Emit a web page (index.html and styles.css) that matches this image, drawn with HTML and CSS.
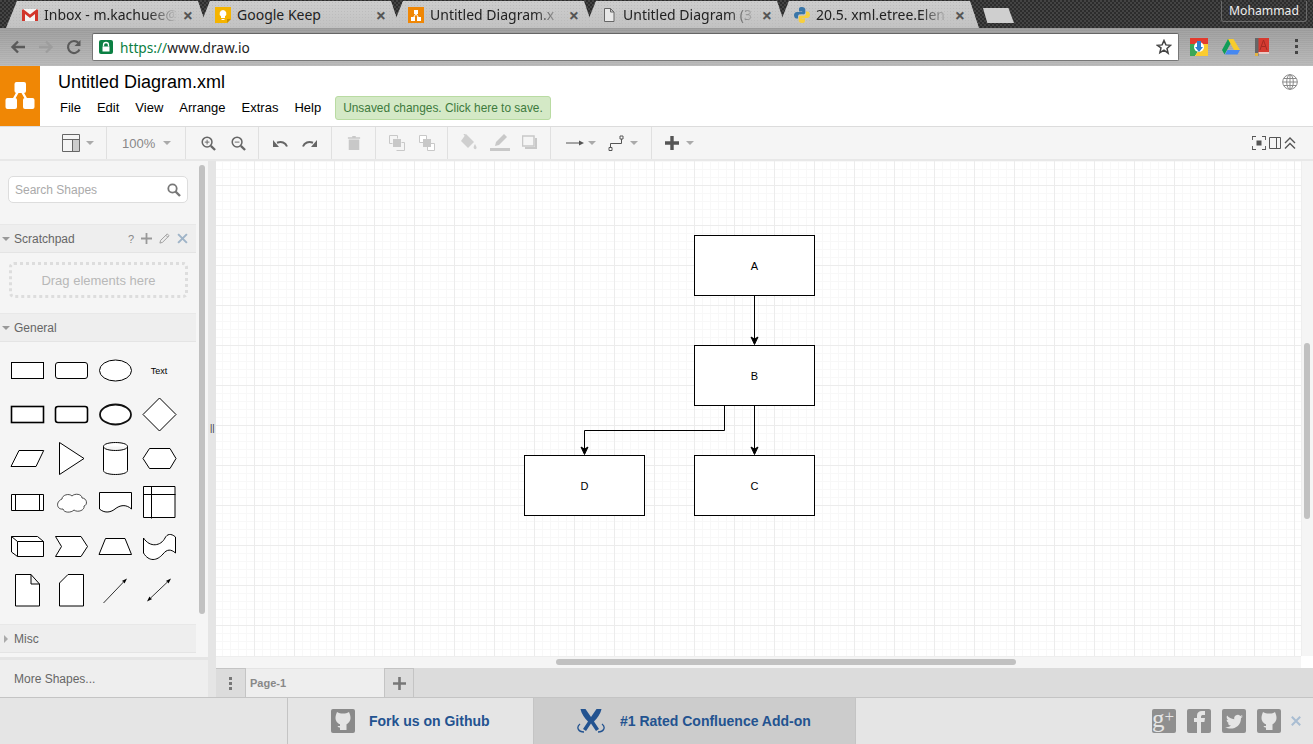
FILE: index.html
```html
<!DOCTYPE html>
<html lang="en">
<head>
<meta charset="utf-8">
<title>Untitled Diagram.xml - draw.io</title>
<link rel="stylesheet" href="styles.css">
</head>
<body>
<div class="tabstrip">
  <div class="tab">
    <svg class="favicon" viewBox="0 0 16 16"><rect x="0" y="2" width="16" height="12" fill="#f4f4f4"/><path d="M0 3v11h3V7l5 4 5-4v7h3V3l-1-1-7 5.500L1 2z" fill="#d2352b"/></svg>
    <span class="tab-title">Inbox - m.kachuee@</span><span class="tab-x">×</span>
  </div>
  <div class="tab">
    <svg class="favicon" viewBox="0 0 16 16"><path d="M0 0h16v12l-4 4H0z" fill="#f5b400"/><path d="M8 3a3.500 3.500 0 0 0-2 6.300V11h4V9.300A3.500 3.500 0 0 0 8 3zM6.500 12h3v1h-3z" fill="#fff"/><path d="M12 16v-4h4z" fill="#c98f00"/></svg>
    <span class="tab-title tab-title-plain">Google Keep</span><span class="tab-x">×</span>
  </div>
  <div class="tab">
    <svg class="favicon" viewBox="0 0 16 16"><rect width="16" height="16" fill="#f08705"/><path d="M6 3h4v4H8.700l2 3H13v4H9v-4h.6L8 7.500 6.400 10H7v4H3v-4h2.300l2-3H6z" fill="#fff"/></svg>
    <span class="tab-title">Untitled Diagram.x</span><span class="tab-x">×</span>
  </div>
  <div class="tab">
    <svg class="favicon" viewBox="0 0 16 16"><path d="M3.500 1.500h6l3.500 3.500v9.500h-9.500zM9.500 1.500v3.500H13" fill="#e8e8e8" stroke="#666"/></svg>
    <span class="tab-title">Untitled Diagram (3</span><span class="tab-x">×</span>
  </div>
  <div class="tab">
    <svg class="favicon" viewBox="0 0 16 16"><path d="M8 0C4.800 0 5 1.500 5 3v1.500h3.200V5H3C1 5 0 6.500 0 8s.8 3.500 2.500 3.500H4V9.500C4 8 5 7.300 6 7.300h3.500c1 0 1.800-.8 1.800-1.800V2.500C11.300 1 10 0 8 0z" fill="#3a76a8"/><path d="M8 16c3.200 0 3-1.500 3-3v-1.500H7.800V11H13c2 0 3-1.500 3-3s-.8-3.500-2.500-3.500H12v2c0 1.500-1 2.200-2 2.200H6.500c-1 0-1.800.8-1.800 1.800v3C4.700 15 6 16 8 16z" fill="#f7cf3e"/></svg>
    <span class="tab-title">20.5. xml.etree.Elen</span><span class="tab-x">×</span>
  </div>
  <div class="newtab"></div>
  <div class="user-badge">Mohammad</div>
</div>

<div class="browserbar">
  <svg class="nav-icon" viewBox="0 0 18 18"><path d="M16 9H4M9 3.500 3.500 9 9 14.500" fill="none" stroke="#5a5a5a" stroke-width="2.400"/></svg>
  <svg class="nav-icon" viewBox="0 0 18 18"><path d="M2 9h12M9 3.500 14.500 9 9 14.500" fill="none" stroke="#9d9d9d" stroke-width="2.400"/></svg>
  <svg class="nav-icon" viewBox="0 0 18 18"><path d="M14.500 11.500A6 6 0 1 1 13.500 5" fill="none" stroke="#5a5a5a" stroke-width="2.200"/><path d="M15.500 2v6h-6z" fill="#5a5a5a"/></svg>
  <div class="omnibox">
    <svg class="lock" viewBox="0 0 14 14"><rect width="14" height="14" rx="2" fill="#0b8043"/><path d="M4.500 6.500V5a2.500 2.500 0 0 1 5 0v1.500" fill="none" stroke="#fff" stroke-width="1.300"/><rect x="3.500" y="6.500" width="7" height="5" fill="#fff"/></svg>
    <span class="url"><span class="url-scheme">https://</span>www.draw.io</span>
    <svg class="star" viewBox="0 0 16 16"><path d="M8 1.500l1.900 4.400 4.700.4-3.600 3.100 1.100 4.700L8 11.100l-4.100 2.500L5 8.900 1.400 6.300l4.700-.4z" fill="none" stroke="#444" stroke-width="1.500"/></svg>
  </div>
  <div class="extensions">
    <svg class="ext" viewBox="0 0 18 18"><rect width="18" height="18" fill="#fff"/><path d="M0 0h18v6H6L0 12z" fill="#e33b2e"/><path d="M0 6l6 0 3 6-4 6H0z" fill="#3aa757"/><path d="M18 6v12H5l4-6h3V6z" fill="#fbcc2f"/><circle cx="9" cy="9" r="5" fill="#fff"/><path d="M7 3h4v6h2l-4 5-4-5h2z" fill="#2f7fd1"/></svg>
    <svg class="ext ext-drive" viewBox="0 0 18 16"><path d="M6 0h5L5 11l-2.500 4.500L0 11z" fill="#0f9d58"/><path d="M6 0h5.500L18 11h-6z" fill="#f7cb2d"/><path d="M5.500 11H18l-2.500 4.500H3z" fill="#4688f1"/></svg>
    <svg class="ext ext-book" viewBox="0 0 14 18"><rect width="14" height="16" fill="#d63a30"/><rect width="3.500" height="18" fill="#666"/><rect x="3.500" y="14" width="10.500" height="2" fill="#e8c9c5"/><rect y="15" width="3" height="3" fill="#e3b341"/><path d="M5 12 8.500 2 12 12M6.500 8.500h4" fill="none" stroke="#a52a22" stroke-width="1"/></svg>
    <svg class="chrome-menu" viewBox="0 0 4 16"><rect y="0" x="0" width="3" height="3" fill="#444"/><rect y="6" x="0" width="3" height="3" fill="#444"/><rect y="12" x="0" width="3" height="3" fill="#444"/></svg>
  </div>
</div>

<header class="app-header">
  <div class="logo">
    <svg viewBox="0 0 40 60" width="40" height="60"><path d="M20 22 11 38M20 22l9 16" stroke="#fff" stroke-width="2.400"/><rect x="14.500" y="16" width="11.500" height="11" rx="2" fill="#fff"/><rect x="5.500" y="32" width="11.500" height="11" rx="2" fill="#fff"/><rect x="23" y="32" width="11.500" height="11" rx="2" fill="#fff"/></svg>
  </div>
  <div class="header-main">
    <div class="doc-title">Untitled Diagram.xml</div>
    <nav class="menubar">
      <span class="menu-item">File</span>
      <span class="menu-item">Edit</span>
      <span class="menu-item">View</span>
      <span class="menu-item">Arrange</span>
      <span class="menu-item">Extras</span>
      <span class="menu-item">Help</span>
      <span class="save-note">Unsaved changes. Click here to save.</span>
    </nav>
  </div>
  <svg class="globe" viewBox="0 0 16 16"><g fill="none" stroke="#8a8a8a"><circle cx="8" cy="8" r="7.300"/><ellipse cx="8" cy="8" rx="3.300" ry="7.300"/><path d="M8 .7v14.600M.7 8h14.600M1.800 4.500h12.400M1.800 11.500h12.400"/></g></svg>
</header>

<div class="toolbar">
  <div class="tg tg-view">
    <svg class="ti ti-18" viewBox="0 0 18 18"><rect x="10" y="5" width="7" height="12" fill="#ccc"/><path d="M.5.5h17v17H.5zM.5 5.500h17M10.500 5.500v12" fill="none" stroke="#666"/></svg>
    <span class="caret"></span>
  </div>
  <div class="tg tg-zoom"><span class="zoom-text">100%</span><span class="caret"></span></div>
  <div class="tg tg-mag">
    <svg class="ti ti-15" viewBox="0 0 16 16"><g fill="none" stroke="#666"><circle cx="6.500" cy="6.500" r="5.200" stroke-width="1.600"/><path d="M10.500 10.500l4.500 4.500" stroke-width="2.400"/><path d="M4 6.500h5M6.500 4v5"/></g></svg>
    <svg class="ti ti-15" viewBox="0 0 16 16"><g fill="none" stroke="#666"><circle cx="6.500" cy="6.500" r="5.200" stroke-width="1.600"/><path d="M10.500 10.500l4.500 4.500" stroke-width="2.400"/><path d="M4 6.500h5"/></g></svg>
  </div>
  <div class="tg tg-undo">
    <svg class="ti ti-16" viewBox="0 0 16 16"><path d="M15 11.500C13.500 7.500 9.500 6 5 7.800" fill="none" stroke="#666" stroke-width="2"/><path d="M1 5v7h6z" fill="#666"/></svg>
    <svg class="ti ti-16" viewBox="0 0 16 16"><path d="M1 11.500C2.500 7.500 6.500 6 11 7.800" fill="none" stroke="#666" stroke-width="2"/><path d="M15 5v7H9z" fill="#666"/></svg>
  </div>
  <div class="tg tg-trash">
    <svg class="ti ti-14" viewBox="0 0 14 16"><path d="M1 4h12v12H1zM0 1.500h14V3H0zM5 0h4v1.500H5z" fill="#c8c8c8"/></svg>
  </div>
  <div class="tg tg-order">
    <svg class="ti ti-16" viewBox="0 0 16 16"><rect x="4" y="4" width="8" height="8" fill="#c8c8c8"/><path d="M.5.500h8v3M.5.500v8h3M7.500 15.500h8v-8h-3" fill="none" stroke="#c8c8c8"/></svg>
    <svg class="ti ti-16" viewBox="0 0 16 16"><path d="M.5.500h7v7h-7zM8.500 8.500h7v7h-7z" fill="#fff" stroke="#c8c8c8"/><rect x="4" y="4" width="8" height="8" fill="#c8c8c8"/></svg>
  </div>
  <div class="tg tg-style">
    <svg class="ti ti-18" viewBox="0 0 18 18"><path d="M6 0l8 8-6 6-7-7z" fill="#cfcfcf"/><path d="M4 0l3 3" stroke="#cfcfcf" stroke-width="1.500"/><path d="M15 10c-1 2-2 3-1 4.500s3 .5 2.500-1.500z" fill="#cfcfcf"/></svg>
    <svg class="ti ti-20" viewBox="0 0 20 18"><path d="M14 0l3 3-8 8-4 1 1-4z" fill="#c8c8c8"/><rect y="14" width="20" height="3" fill="#c8c8c8"/></svg>
    <svg class="ti ti-16" viewBox="0 0 16 16"><path d="M.500 1h11.500v10H.5z" fill="#f5f5f5" stroke="#c8c8c8" stroke-width="1.500"/><path d="M3 12h10V3h2v11H3z" fill="#c8c8c8"/></svg>
  </div>
  <div class="tg tg-conn">
    <svg class="ti ti-18" viewBox="0 0 18 10"><path d="M0 5h13" stroke="#555"/><path d="M13 2.500l5 2.500-5 2.500z" fill="#555"/></svg>
    <span class="caret"></span>
    <svg class="ti ti-16 tg-gap" viewBox="0 0 16 16"><path d="M2.500 12.500V8.500H13.500V3.500" fill="none" stroke="#555"/><path d="M1 12.500h3v3H1zM12 1h3v3h-3z" fill="#fff" stroke="#555"/></svg>
    <span class="caret"></span>
  </div>
  <div class="tg tg-add">
    <svg class="ti ti-14" viewBox="0 0 14 14"><path d="M7 0v14M0 7h14" stroke="#555" stroke-width="3.400"/></svg>
    <span class="caret"></span>
  </div>
  <div class="tg-right">
    <svg class="ti ti-14" viewBox="0 0 14 14"><path d="M0 4V0h4M10 0h4v4M14 10v4h-4M4 14H0v-4" fill="none" stroke="#555" stroke-width="1.800"/><rect x="4.500" y="4.500" width="5" height="5" fill="#555"/></svg>
    <svg class="ti ti-12" viewBox="0 0 12 12"><path d="M.5.500h11v11H.5zM7.500.5v11" fill="none" stroke="#555"/></svg>
    <svg class="ti ti-12" viewBox="0 0 12 12"><path d="M1 6l5-5 5 5M1 11.500l5-5 5 5" fill="none" stroke="#555" stroke-width="1.400"/></svg>
  </div>
</div>

<div class="workspace">
  <aside class="sidebar">
    <div class="palette">
      <div class="palette-scroll">
        <div class="searchbox">
          <span class="search-hint">Search Shapes</span>
          <svg class="search-icon" viewBox="0 0 14 14"><circle cx="5.500" cy="5.500" r="4.200" fill="none" stroke="#777" stroke-width="1.800"/><path d="M8.500 8.500l4.500 4.500" stroke="#777" stroke-width="2.400"/></svg>
        </div>
        <div class="section-head section-scratch">
          <span class="tri-down"></span><span class="section-name">Scratchpad</span>
          <span class="scratch-tools">
            <span class="scratch-q">?</span>
            <svg class="st" viewBox="0 0 11 11"><path d="M5.500 0v11M0 5.500h11" stroke="#999" stroke-width="1.800"/></svg>
            <svg class="st" viewBox="0 0 12 12"><path d="M1 11l.8-3L9 1l2 2-7.200 7.200zM7.500 2.500l2 2" fill="none" stroke="#999"/></svg>
            <svg class="st" viewBox="0 0 10 10"><path d="M1 1l8 8M9 1l-8 8" stroke="#9fb4c8" stroke-width="1.800"/></svg>
          </span>
        </div>
        <div class="dropzone">Drag elements here</div>
        <div class="section-head section-general"><span class="tri-down"></span><span class="section-name">General</span></div>
        <div class="shapes">
          <svg class="shape" viewBox="0 0 44 44"><rect x="6.500" y="14.500" width="32" height="16" fill="#fff" stroke="#000"/></svg>
          <svg class="shape" viewBox="0 0 44 44"><rect x="6.500" y="14.500" width="32" height="16" rx="2.500" fill="#fff" stroke="#000"/></svg>
          <svg class="shape" viewBox="0 0 44 44"><ellipse cx="22.500" cy="22.500" rx="16" ry="10.500" fill="#fff" stroke="#000"/></svg>
          <svg class="shape" viewBox="0 0 44 44"><text x="22" y="26" class="shape-text">Text</text></svg>

          <svg class="shape" viewBox="0 0 44 44"><rect x="6.500" y="14.500" width="32" height="16" fill="#fff" stroke="#000" stroke-width="1.600"/></svg>
          <svg class="shape" viewBox="0 0 44 44"><rect x="6.500" y="14.500" width="32" height="16" rx="2.500" fill="#fff" stroke="#000" stroke-width="1.600"/></svg>
          <svg class="shape" viewBox="0 0 44 44"><ellipse cx="22.500" cy="22.500" rx="15.500" ry="10" fill="#fff" stroke="#111" stroke-width="1.800"/></svg>
          <svg class="shape" viewBox="0 0 44 44"><path d="M22.500 6 39 22.500 22.500 39 6 22.500z" fill="#fff" stroke="#000"/></svg>

          <svg class="shape" viewBox="0 0 44 44"><path d="M6 30.500 14 14.500H38.700L31 30.500z" fill="#fff" stroke="#000"/></svg>
          <svg class="shape" viewBox="0 0 44 44"><path d="M10.500 6.500 35 22.500 10.500 38.500z" fill="#fff" stroke="#000"/></svg>
          <svg class="shape" viewBox="0 0 44 44"><path d="M10.500 10.500c0-5.300 24-5.300 24 0v24c0 5.300-24 5.300-24 0zM10.500 10.500c0 5.300 24 5.300 24 0" fill="#fff" stroke="#000"/></svg>
          <svg class="shape" viewBox="0 0 44 44"><path d="M6 22.500 12.500 12.500H33L39 22.500 33 32.500H12.500z" fill="#fff" stroke="#000"/></svg>

          <svg class="shape" viewBox="0 0 44 44"><path d="M6.500 14.500h32v16h-32zM10.500 14.500v16M34.500 14.500v16" fill="#fff" stroke="#000"/></svg>
          <svg class="shape" viewBox="0 0 44 44"><path d="M13 19C13 15 20 13 23 16 26 13 33 14 33 18 38 18 39 25 35 26 36 30 29 33 25 30 22 33 15 33 14 29 8 30 6 22 13 19Z" fill="#fff" stroke="#222" stroke-width=".8"/></svg>
          <svg class="shape" viewBox="0 0 44 44"><path d="M6.500 12.500H38.500V29C33 24 27 25 22 29 17 33 11 33 6.500 29Z" fill="#fff" stroke="#000"/></svg>
          <svg class="shape" viewBox="0 0 44 44"><path d="M6.500 6.500h31.500v31h-31.500zM14.500 6.500v32M6.500 14.500h32" fill="#fff" stroke="#000"/></svg>

          <svg class="shape" viewBox="0 0 44 44"><path d="M6.500 12.500H32.500L38.500 17.500V32.500H12.500L6.500 28ZM12.500 17.500H38.500M12.500 17.500V32.500M6.500 12.500 12.500 17.500" fill="#fff" stroke="#000"/></svg>
          <svg class="shape" viewBox="0 0 44 44"><path d="M6.500 12.500H32l6.500 10-6.500 10H6.500l6-10z" fill="#fff" stroke="#000"/></svg>
          <svg class="shape" viewBox="0 0 44 44"><path d="M6 30.500 12.500 14.500H32L38.500 30.500z" fill="#fff" stroke="#000"/></svg>
          <svg class="shape" viewBox="0 0 44 44"><path d="M6.500 14C13 24 24 22 28 14 30 10 34 9 38.500 13V29C34 25 30 25 26 30 20 37 12 38 6.500 29Z" fill="#fff" stroke="#000"/></svg>

          <svg class="shape" viewBox="0 0 44 44"><path d="M10.500 6.500H26l8.500 9.500v22h-24zM26 6.500V16h8.500" fill="#fff" stroke="#000"/></svg>
          <svg class="shape" viewBox="0 0 44 44"><path d="M19 6.500h15.500v31.500h-24V15z" fill="#fff" stroke="#000"/></svg>
          <svg class="shape" viewBox="0 0 44 44"><path d="M10.500 35 31 13.500" stroke="#000" stroke-width=".8"/><path d="M34 10.500 31.500 15.500 30.500 13.800 28.800 13z" fill="#000"/></svg>
          <svg class="shape" viewBox="0 0 44 44"><path d="M12 31.500 31 13.500" stroke="#000" stroke-width=".8"/><path d="M34 10.500 31.500 15.500 30.500 13.800 28.800 13zM10 33.500 12.500 28.500 13.500 30.200 15.200 31z" fill="#000"/></svg>
        </div>
        <div class="section-head section-misc"><span class="tri-right"></span><span class="section-name">Misc</span></div>
      </div>
      <div class="side-thumb"></div>
    </div>
    <div class="more-shapes">More Shapes...</div>
  </aside>
  <div class="splitter"><span class="splitter-mark">||</span></div>
  <div class="editor">
    <div class="canvas-row">
      <div class="canvas">
        <svg class="diagram" viewBox="0 0 1085 495" width="1085" height="495">
          <g fill="#fff" stroke="#000">
            <rect x="478.500" y="74.500" width="120" height="60"/>
            <rect x="478.500" y="184.500" width="120" height="60"/>
            <rect x="478.500" y="294.500" width="120" height="60"/>
            <rect x="308.500" y="294.500" width="120" height="60"/>
          </g>
          <g fill="none" stroke="#000">
            <path d="M538.500 134.500V178"/>
            <path d="M538.500 244.500V288"/>
            <path d="M508.500 244.500V269.500H368.500V288"/>
          </g>
          <g fill="#000" stroke="#000">
            <path d="M538.500 183.500 535 176 538.500 178 542 176z"/>
            <path d="M538.500 293.500 535 286 538.500 288 542 286z"/>
            <path d="M368.500 293.500 365 286 368.500 288 372 286z"/>
          </g>
          <g class="node-text">
            <text x="538.500" y="109">A</text>
            <text x="538.500" y="219">B</text>
            <text x="538.500" y="329">C</text>
            <text x="368.500" y="329">D</text>
          </g>
        </svg>
      </div>
      <div class="vscroll"><div class="vthumb"></div></div>
    </div>
    <div class="hscroll-row">
      <div class="hscroll"><div class="hthumb"></div></div>
      <div class="corner"></div>
    </div>
    <div class="pagebar">
      <div class="page-menu"><svg class="page-dots" viewBox="0 0 3 13"><path d="M0 0h3v3H0zM0 5h3v3H0zM0 10h3v3H0z" fill="#777"/></svg></div>
      <div class="page-tab">Page-1</div>
      <div class="page-add"><svg class="page-plus" viewBox="0 0 13 13"><path d="M6.500 0v13M0 6.500h13" stroke="#777" stroke-width="2.600"/></svg></div>
    </div>
  </div>
</div>

<footer class="promo">
  <div class="promo-lead"></div>
  <div class="promo-cell promo-github">
    <svg class="promo-icon" viewBox="0 0 24 24"><rect width="24" height="24" rx="2" fill="#8a8a8a"/><path d="M6 3C8 4.500 9.500 4.500 12 4.500 14.500 4.500 16 4.500 18 3 19 5.500 19.500 7 19.500 9 19.500 12.500 17 14.500 15.500 15.200V21H9V18.500C8 18.500 7 18 6.500 17L9 17V15.200C7 14.500 4.500 12.500 4.500 9 4.500 7 5 5.500 6 3Z" fill="#e5e5e5"/></svg>
    <span class="promo-text">Fork us on Github</span>
  </div>
  <div class="promo-cell promo-confluence">
    <svg class="promo-icon promo-icon-x" viewBox="0 0 28 24"><path d="M3.500 0h5l5.500 8 5.500-8h5c-1 5-4.500 9.500-7.500 12.500l5 7.500-3 2-5-7.500-5 7.500-3-2 5-7.500C8 9.500 4.500 5 3.500 0z" fill="#235390"/><path d="M3 15c-4 3-2 8 4 8M25 15c4 3 2 8-4 8" fill="none" stroke="#235390" stroke-width="1.300"/></svg>
    <span class="promo-text">#1 Rated Confluence Add-on</span>
  </div>
  <div class="social">
    <div class="social-icon"><span class="gplus">g<span class="gplus-mark">+</span></span></div>
    <div class="social-icon"><svg viewBox="0 0 24 24" class="social-svg"><path d="M10 24V13H7V9h3V6.500C10 3.500 12 2 15 2h3v4h-2c-1 0-2 .5-2 1.500V9h4l-.6 4H14v11z" fill="#e5e5e5"/></svg></div>
    <div class="social-icon"><svg viewBox="0 0 24 24" class="social-svg"><path d="M21 7.500c-.7.300-1.400.5-2 .6.700-.5 1.300-1.200 1.500-2-.7.400-1.400.7-2.200.9a3.500 3.500 0 0 0-6 3.200c-3-.2-5.500-1.600-7.200-3.700-.9 1.600-.4 3.600 1.100 4.600-.6 0-1.100-.2-1.600-.4 0 1.700 1.200 3.100 2.800 3.500-.5.100-1 .1-1.600 0 .5 1.400 1.700 2.400 3.300 2.400A7 7 0 0 1 3 18c6 3.700 16 1 16-9 .8-.4 1.500-1 2-1.500z" fill="#e5e5e5"/></svg></div>
    <div class="social-icon"><svg viewBox="0 0 24 24" class="social-svg"><path d="M6 3C8 4.500 9.500 4.500 12 4.500 14.500 4.500 16 4.500 18 3 19 5.500 19.500 7 19.500 9 19.500 12.500 17 14.500 15.500 15.200V21H9V18.500C8 18.500 7 18 6.500 17L9 17V15.200C7 14.500 4.500 12.500 4.500 9 4.500 7 5 5.500 6 3Z" fill="#e5e5e5"/></svg></div>
    <svg class="promo-close" viewBox="0 0 10 10"><path d="M.8.800l8.400 8.400M9.200.8.800 9.200" stroke="#a9bdd2" stroke-width="2"/></svg>
  </div>
</footer>
</body>
</html>
```

FILE: styles.css
```css
* { box-sizing: border-box; }
html, body { margin: 0; padding: 0; }
body {
  width: 1313px;
  height: 744px;
  overflow: hidden;
  display: flex;
  flex-direction: column;
  font-family: "Liberation Sans", Arial, sans-serif;
  background: #fff;
}

/* browser tab strip */
.tabstrip {
  position: relative;
  flex: 0 0 28px;
  height: 28px;
  padding: 1px 0 0 6px;
  display: flex;
  background: conic-gradient(#2c2c2c 25%, #444 0 50%, #2c2c2c 0 75%, #444 0) 0 0 / 4px 4px;
  overflow: hidden;
}
.tab {
  flex: 0 0 201px;
  width: 201px;
  height: 27px;
  margin-right: -8px;
  padding: 0 14px 0 16px;
  display: flex;
  align-items: center;
  gap: 6px;
  background:
    radial-gradient(#bcbcbc 30%, transparent 35%) 0 0 / 3px 3px,
    linear-gradient(#cdcdcd, #c2c2c2);
  clip-path: polygon(0 100%, 11px 0, calc(100% - 9px) 0, 100% 100%);
  font-family: "Noto Sans", sans-serif;
  font-size: 14px;
  color: #222;
}
.favicon { flex: 0 0 16px; width: 16px; height: 16px; }
.tab-title {
  flex: 1;
  min-width: 0;
  white-space: nowrap;
  -webkit-mask-image: linear-gradient(90deg, #000 78%, #0000 100%);
  mask-image: linear-gradient(90deg, #000 78%, #0000 100%);
}
.tab-title-plain { -webkit-mask-image: none; mask-image: none; }
.tab-x { flex: 0 0 auto; font-size: 18px; line-height: 18px; color: #555; font-weight: 700; }
.newtab {
  flex: 0 0 31px;
  height: 15px;
  margin: 7px 0 0 12px;
  background: #cfcfcf;
  clip-path: polygon(0 0, 82% 0, 100% 100%, 14% 100%);
}
.user-badge {
  position: absolute;
  right: 6px;
  top: 1px;
  width: 86px;
  height: 21px;
  border: 1px solid #6a6a6a;
  border-top: 0;
  border-radius: 0 0 3px 3px;
  color: #eee;
  font-family: "Noto Sans", sans-serif;
  font-size: 12.200px;
  line-height: 20px;
  text-align: center;
}

/* browser toolbar */
.browserbar {
  flex: 0 0 38px;
  height: 38px;
  padding: 5px 0 5px 9px;
  display: flex;
  align-items: center;
  background:
    repeating-linear-gradient(#0000 0 1px, #ffffff14 1px 2px),
    linear-gradient(#9a9a9a, #b6b6b6);
}
.nav-icon { flex: 0 0 18px; width: 18px; height: 18px; margin-right: 10px; }
.omnibox {
  flex: 0 0 1087px;
  height: 28px;
  margin-left: -1px;
  padding: 0 6px;
  display: flex;
  align-items: center;
  background: #fff;
  border: 1px solid #777;
  border-top-color: #666;
  border-radius: 2px;
}
.lock { flex: 0 0 14px; width: 14px; height: 14px; }
.url {
  flex: 1;
  margin-left: 7px;
  font-family: "Noto Sans", sans-serif;
  font-size: 13.700px;
  color: #222;
}
.url-scheme { color: #0b8043; }
.star { width: 16px; height: 16px; }
.extensions { flex: 1; display: flex; align-items: center; padding-left: 11px; }
.ext { width: 18px; height: 18px; }
.ext-drive { width: 18px; height: 16px; margin-left: 14px; }
.ext-book { width: 14px; height: 18px; margin-left: 15px; }
.chrome-menu { width: 4px; height: 16px; margin-left: 26px; }

/* app header */
.app-header {
  position: relative;
  flex: 0 0 60px;
  height: 60px;
  display: flex;
  background: #fff;
}
.logo { flex: 0 0 40px; width: 40px; height: 60px; background: #f08705; }
.logo svg { display: block; }
.header-main { padding-left: 18px; }
.doc-title {
  padding-top: 6px;
  height: 30px;
  font-size: 18px;
  line-height: 20px;
  color: #000;
}
.menubar { display: flex; align-items: center; padding-left: 2px; font-size: 13px; color: #000; }
.menu-item { margin-right: 16px; line-height: 24px; }
.save-note {
  height: 24px;
  padding: 0 7px;
  margin-left: -2px;
  font-size: 11.900px;
  line-height: 22px;
  color: #3d7a3d;
  background: #d4e9c6;
  border: 1px solid #b9dba2;
  border-radius: 3px;
  white-space: nowrap;
}
.globe { position: absolute; top: 8px; right: 15px; width: 16px; height: 16px; }

/* app toolbar */
.toolbar {
  flex: 0 0 35px;
  height: 35px;
  display: flex;
  background: #f5f5f5;
  border-top: 1px solid #dcdcdc;
  border-bottom: 2px solid #e8e8e8;
}
.tg {
  display: flex;
  align-items: center;
  height: 100%;
  border-right: 1px solid #e0e0e0;
}
.tg-view { width: 107px; padding-left: 62px; gap: 6px; }
.tg-zoom { width: 79px; padding-left: 14px; gap: 8px; }
.tg-mag { width: 73px; padding-left: 15px; gap: 15px; }
.tg-undo { width: 73px; padding-left: 13px; gap: 14px; }
.tg-trash { width: 44px; padding-left: 15px; }
.tg-order { width: 72px; padding-left: 13px; gap: 14px; }
.tg-style { width: 103px; padding-left: 12px; gap: 12px; }
.tg-conn { width: 101px; padding-left: 15px; gap: 4px; }
.tg-gap { margin: 0 2px 0 8px; }
.tg-add { padding-left: 13px; gap: 7px; border-right: 0; }
.tg-right { margin-left: auto; padding-right: 17px; display: flex; align-items: center; gap: 3px; }
.ti { display: block; }
.ti-12 { width: 12px; height: 12px; }
.ti-14 { width: 14px; height: 14px; }
.ti-15 { width: 15px; height: 15px; }
.ti-16 { width: 16px; height: 16px; }
.ti-18 { width: 18px; height: 18px; }
.ti-20 { width: 20px; height: 18px; }
.caret {
  width: 0;
  height: 0;
  border: 4px solid transparent;
  border-top: 4.500px solid #aaa;
  border-bottom: 0;
}
.zoom-text { font-size: 13px; color: #888; margin-left: 1px; }

/* workspace */
.workspace { flex: 1; min-height: 0; display: flex; }
.sidebar {
  flex: 0 0 208px;
  width: 208px;
  display: flex;
  flex-direction: column;
  background: #f5f5f5;
}
.palette { position: relative; flex: 1; min-height: 0; overflow: hidden; }
.palette-scroll { width: 196px; }
.side-thumb {
  position: absolute;
  left: 199px;
  top: 4px;
  width: 6px;
  height: 449px;
  background: #c1c1c1;
  border-radius: 3px;
}
.searchbox {
  width: 180px;
  height: 27px;
  margin: 15px 0 21px 8px;
  padding: 0 7px 0 6px;
  display: flex;
  align-items: center;
  justify-content: space-between;
  background: #fff;
  border: 1px solid #ddd;
  border-radius: 5px;
  font-size: 12px;
  color: #aaa;
}
.search-icon { width: 14px; height: 14px; margin-right: -1px; }
.section-head {
  display: flex;
  align-items: center;
  height: 29px;
  background: #eee;
  border-bottom: 1px solid #e4e4e4;
  border-top: 1px solid #e8e8e8;
  font-size: 12px;
  color: #666;
}
.section-name { margin-left: 4px; }
.tri-down {
  margin-left: 2px;
  width: 0;
  height: 0;
  border: 4px solid transparent;
  border-top: 4.500px solid #999;
  border-bottom: 0;
}
.tri-right {
  margin: 0 2px 0 4px;
  width: 0;
  height: 0;
  border: 4px solid transparent;
  border-left: 4.500px solid #aaa;
  border-right: 0;
}
.scratch-tools { margin-left: auto; margin-right: 8px; display: flex; align-items: center; gap: 7px; }
.scratch-q { font-size: 11px; color: #888; }
.st { width: 11px; height: 11px; }
.dropzone {
  width: 179px;
  height: 36px;
  margin: 9px 0 15px 9px;
  border: 3px dotted #ddd;
  border-radius: 5px;
  font-size: 13px;
  line-height: 31px;
  text-align: center;
  color: #b8b8b8;
}
.shapes {
  padding: 6px 0 0 5px;
  display: grid;
  grid-template-columns: repeat(4, 44px);
  grid-auto-rows: 44px;
  height: 282px;
}
.shape { width: 44px; height: 44px; display: block; }
.shape-text { font-size: 9px; text-anchor: middle; fill: #000; }
.more-shapes {
  flex: 0 0 40px;
  height: 40px;
  padding-left: 14px;
  background: #eee;
  border-top: 3px solid #e5e5e5;
  font-size: 12px;
  line-height: 38px;
  color: #666;
}
.splitter {
  position: relative;
  flex: 0 0 8px;
  width: 8px;
  background: #e5e5e5;
}
.splitter-mark {
  position: absolute;
  left: 2px;
  top: 262px;
  font-size: 9px;
  color: #333;
}

/* editor */
.editor { flex: 1; min-width: 0; display: flex; flex-direction: column; }
.canvas-row { flex: 0 0 495px; height: 495px; display: flex; }
.canvas {
  flex: 0 0 1085px;
  width: 1085px;
  height: 495px;
  background-color: #fff;
  background-image:
    linear-gradient(#ececec 1px, transparent 1px),
    linear-gradient(90deg, #ececec 1px, transparent 1px),
    linear-gradient(#f8f8f8 1px, transparent 1px),
    linear-gradient(90deg, #f8f8f8 1px, transparent 1px);
  background-size: 40px 40px, 40px 40px, 8px 8px, 8px 8px;
  background-position: 0 24px, 38px 0, 0 0, 6px 0;
}
.diagram { display: block; }
.node-text text {
  font-family: "Liberation Sans", Arial, sans-serif;
  font-size: 11px;
  text-anchor: middle;
  fill: #000;
}
.vscroll { position: relative; flex: 1; background: #f5f5f5; border-left: 1px solid #eee; }
.vthumb {
  position: absolute;
  left: 2px;
  top: 182px;
  width: 6px;
  height: 176px;
  border-radius: 3px;
  background: #c1c1c1;
}
.hscroll-row { flex: 0 0 12px; height: 12px; display: flex; }
.hscroll { position: relative; flex: 1; background: #f5f5f5; border-top: 1px solid #eee; }
.hthumb {
  position: absolute;
  left: 340px;
  top: 2px;
  width: 460px;
  height: 6px;
  border-radius: 3px;
  background: #c1c1c1;
}
.corner { flex: 0 0 12px; background: #fff; }
.pagebar { flex: 1; display: flex; background: #dcdcdc; }
.page-menu, .page-add {
  display: flex;
  align-items: center;
  justify-content: center;
  border-top: 1px solid #c4c4c4;
}
.page-menu { flex: 0 0 30px; border-right: 1px solid #c4c4c4; }
.page-add { flex: 0 0 30px; border-left: 1px solid #c4c4c4; border-right: 1px solid #c4c4c4; }
.page-dots { width: 3px; height: 13px; }
.page-plus { width: 13px; height: 13px; }
.page-tab {
  flex: 0 0 138px;
  padding-left: 4px;
  background: #eee;
  border-top: 1px solid #e4e4e4;
  font-size: 11px;
  font-weight: 700;
  line-height: 28px;
  color: #888;
}

/* promo footer */
.promo {
  flex: 0 0 47px;
  height: 47px;
  display: flex;
  background: #e5e5e5;
  border-top: 1px solid #c4c4c4;
}
.promo-lead { flex: 0 0 287px; }
.promo-cell {
  display: flex;
  align-items: center;
  border-left: 1px solid #c4c4c4;
}
.promo-github { flex: 0 0 246px; padding-left: 43px; gap: 14px; }
.promo-confluence { flex: 0 0 323px; padding-left: 43px; gap: 15px; background: #ccc; border-right: 1px solid #c4c4c4; }
.promo-icon { flex: 0 0 24px; width: 24px; height: 24px; }
.promo-icon-x { flex: 0 0 28px; width: 28px; }
.promo-text { font-size: 14px; font-weight: 700; color: #235390; white-space: nowrap; }
.social {
  margin-left: auto;
  padding-right: 12px;
  display: flex;
  align-items: center;
  gap: 11px;
}
.social-icon {
  width: 24px;
  height: 24px;
  background: #8f8f8f;
  border-radius: 2px;
}
.social-svg { display: block; width: 24px; height: 24px; }
.gplus {
  display: block;
  font-family: "Liberation Serif", serif;
  font-size: 25px;
  line-height: 19px;
  color: #e5e5e5;
  white-space: nowrap;
}
.gplus-mark {
  font-size: 17px;
  line-height: 10px;
  vertical-align: 5px;
}
.promo-close { width: 10px; height: 10px; margin-left: -1px; }
```
